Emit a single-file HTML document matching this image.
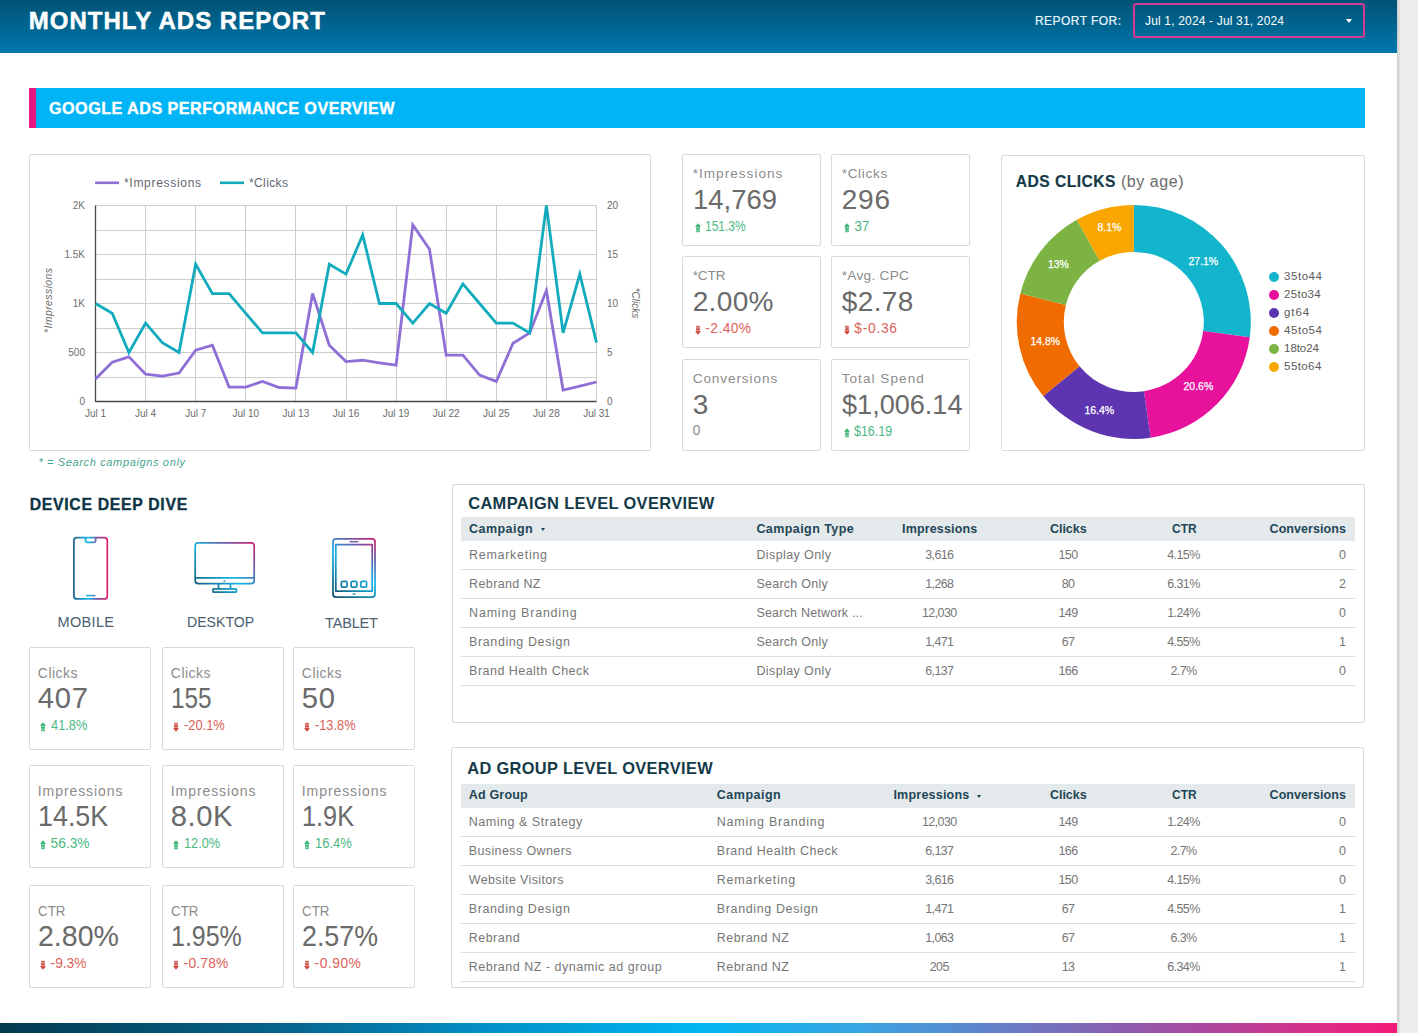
<!DOCTYPE html>
<html><head><meta charset="utf-8"><title>Monthly Ads Report</title>
<style>
html,body{margin:0;padding:0}
body{width:1418px;height:1033px;position:relative;overflow:hidden;background:#ededed;font-family:'Liberation Sans', sans-serif}
.t{position:absolute;white-space:pre;font-family:'Liberation Sans', sans-serif}
</style></head><body>
<div style="position:absolute;left:0px;top:0px;width:1397px;height:1033px;background:#fff"></div><div style="position:absolute;left:1397px;top:0px;width:3px;height:1033px;background:linear-gradient(90deg,#cccccc,#e4e4e4)"></div><div style="position:absolute;left:0px;top:0px;width:1397px;height:53px;background:linear-gradient(#005274,#0078ad)"></div><div style="position:absolute;left:1133px;top:3px;width:232px;height:35px;border:2px solid #d43a94;border-radius:3px;box-sizing:border-box"></div><div style="position:absolute;left:1346px;top:19px;width:0;height:0;border-left:3.5px solid transparent;border-right:3.5px solid transparent;border-top:4px solid #fff"></div><div style="position:absolute;left:29px;top:88px;width:1336px;height:40px;background:#00b4f5"></div><div style="position:absolute;left:29px;top:88px;width:7px;height:40px;background:#e8177f"></div><div style="position:absolute;left:0px;top:1023px;width:1397px;height:10px;background:linear-gradient(90deg,#033a50 0%,#06648c 20%,#0390c8 35%,#00b6f2 50%,#3aa4e2 62%,#8a5eb0 80%,#f51a78 100%)"></div><div style="position:absolute;left:29px;top:154px;width:622px;height:297px;border:1px solid #dadada;border-radius:2px;box-sizing:border-box;background:#fff"></div><svg style="position:absolute;left:0;top:0" width="1418" height="1033"><line x1="95.5" y1="205.50" x2="596.5" y2="205.50" stroke="#cccccc" stroke-width="1"/><line x1="95.5" y1="230.50" x2="596.5" y2="230.50" stroke="#cccccc" stroke-width="1"/><line x1="95.5" y1="254.50" x2="596.5" y2="254.50" stroke="#cccccc" stroke-width="1"/><line x1="95.5" y1="279.50" x2="596.5" y2="279.50" stroke="#cccccc" stroke-width="1"/><line x1="95.5" y1="303.50" x2="596.5" y2="303.50" stroke="#cccccc" stroke-width="1"/><line x1="95.5" y1="328.50" x2="596.5" y2="328.50" stroke="#cccccc" stroke-width="1"/><line x1="95.5" y1="352.50" x2="596.5" y2="352.50" stroke="#cccccc" stroke-width="1"/><line x1="95.5" y1="377.50" x2="596.5" y2="377.50" stroke="#cccccc" stroke-width="1"/><line x1="95.5" y1="401.50" x2="596.5" y2="401.50" stroke="#cccccc" stroke-width="1"/><line x1="95.50" y1="205.5" x2="95.50" y2="401.5" stroke="#cccccc" stroke-width="1"/><line x1="145.50" y1="205.5" x2="145.50" y2="401.5" stroke="#cccccc" stroke-width="1"/><line x1="195.50" y1="205.5" x2="195.50" y2="401.5" stroke="#cccccc" stroke-width="1"/><line x1="245.50" y1="205.5" x2="245.50" y2="401.5" stroke="#cccccc" stroke-width="1"/><line x1="295.50" y1="205.5" x2="295.50" y2="401.5" stroke="#cccccc" stroke-width="1"/><line x1="346.50" y1="205.5" x2="346.50" y2="401.5" stroke="#cccccc" stroke-width="1"/><line x1="396.50" y1="205.5" x2="396.50" y2="401.5" stroke="#cccccc" stroke-width="1"/><line x1="446.50" y1="205.5" x2="446.50" y2="401.5" stroke="#cccccc" stroke-width="1"/><line x1="496.50" y1="205.5" x2="496.50" y2="401.5" stroke="#cccccc" stroke-width="1"/><line x1="546.50" y1="205.5" x2="546.50" y2="401.5" stroke="#cccccc" stroke-width="1"/><line x1="596.50" y1="205.5" x2="596.50" y2="401.5" stroke="#cccccc" stroke-width="1"/><line x1="95.5" y1="205.5" x2="95.5" y2="402.0" stroke="#4a4a4a" stroke-width="1.3"/><line x1="95.5" y1="401.5" x2="596.5" y2="401.5" stroke="#4a4a4a" stroke-width="1.3"/><polyline points="95.50,379.06 112.20,362.20 128.90,356.81 145.60,374.16 162.30,376.12 179.00,373.08 195.70,350.25 212.40,345.25 229.10,387.09 245.80,387.09 262.50,381.41 279.20,387.49 295.90,388.07 312.60,293.50 329.30,345.25 346.00,361.61 362.70,360.24 379.40,362.79 396.10,365.14 412.80,224.90 429.50,249.31 446.20,355.15 462.90,355.15 479.60,375.14 496.30,381.41 513.00,343.29 529.70,332.90 546.40,290.56 563.10,390.03 579.80,386.02 596.50,382.00" fill="none" stroke="#8f6fd6" stroke-width="2.8" stroke-linejoin="miter"/><polyline points="95.50,303.50 112.20,313.30 128.90,352.50 145.60,323.10 162.30,342.70 179.00,352.50 195.70,264.30 212.40,293.70 229.10,293.70 245.80,313.30 262.50,332.90 279.20,332.90 295.90,332.90 312.60,352.50 329.30,264.30 346.00,274.10 362.70,234.90 379.40,303.50 396.10,303.50 412.80,323.10 429.50,303.50 446.20,313.30 462.90,283.90 479.60,303.50 496.30,323.10 513.00,323.10 529.70,332.90 546.40,205.50 563.10,332.90 579.80,274.10 596.50,342.70" fill="none" stroke="#12abbd" stroke-width="2.8" stroke-linejoin="miter"/><line x1="95" y1="182.8" x2="119" y2="182.8" stroke="#8f6fd6" stroke-width="2.6"/><line x1="220" y1="182.8" x2="244" y2="182.8" stroke="#12abbd" stroke-width="2.6"/></svg><div style="position:absolute;left:18px;top:296px;width:60px;height:14px;line-height:14px;text-align:center;font-size:10.5px;letter-spacing:0.4px;font-style:italic;color:#6d6d6d;font-family:'Liberation Sans', sans-serif;transform:rotate(-90deg);transform-origin:30px 7px;">*Impressions</div><div style="position:absolute;left:605px;top:296px;width:60px;height:14px;line-height:14px;text-align:center;font-size:10px;font-style:italic;color:#6d6d6d;font-family:'Liberation Sans', sans-serif;transform:rotate(90deg);transform-origin:30px 7px;">*Clicks</div><div style="position:absolute;left:682px;top:154px;width:139px;height:92px;border:1px solid #dadada;border-radius:2px;box-sizing:border-box;background:#fff"></div><svg style="position:absolute;left:694.9px;top:222.6px" width="6" height="10"><path d="M3 0.2 L5.6 3.3 L5 4.4 L1 4.4 L0.4 3.3 Z" fill="#3bb578"/><rect x="1.1" y="4.9" width="3.8" height="1.9" fill="#3bb578"/><rect x="1.1" y="7.2" width="3.8" height="2" fill="#3bb578" opacity="0.85"/></svg><div style="position:absolute;left:831px;top:154px;width:139px;height:92px;border:1px solid #dadada;border-radius:2px;box-sizing:border-box;background:#fff"></div><svg style="position:absolute;left:843.9px;top:222.6px" width="6" height="10"><path d="M3 0.2 L5.6 3.3 L5 4.4 L1 4.4 L0.4 3.3 Z" fill="#3bb578"/><rect x="1.1" y="4.9" width="3.8" height="1.9" fill="#3bb578"/><rect x="1.1" y="7.2" width="3.8" height="2" fill="#3bb578" opacity="0.85"/></svg><div style="position:absolute;left:682px;top:256px;width:139px;height:92px;border:1px solid #dadada;border-radius:2px;box-sizing:border-box;background:#fff"></div><svg style="position:absolute;left:694.9px;top:324.59999999999997px" width="6" height="10"><path d="M3 9.8 L5.6 6.7 L5 5.6 L1 5.6 L0.4 6.7 Z" fill="#d04a42"/><rect x="1.1" y="3.2" width="3.8" height="1.9" fill="#d04a42"/><rect x="1.1" y="0.8" width="3.8" height="2" fill="#d04a42" opacity="0.85"/></svg><div style="position:absolute;left:831px;top:256px;width:139px;height:92px;border:1px solid #dadada;border-radius:2px;box-sizing:border-box;background:#fff"></div><svg style="position:absolute;left:843.9px;top:324.59999999999997px" width="6" height="10"><path d="M3 9.8 L5.6 6.7 L5 5.6 L1 5.6 L0.4 6.7 Z" fill="#d04a42"/><rect x="1.1" y="3.2" width="3.8" height="1.9" fill="#d04a42"/><rect x="1.1" y="0.8" width="3.8" height="2" fill="#d04a42" opacity="0.85"/></svg><div style="position:absolute;left:682px;top:359px;width:139px;height:92px;border:1px solid #dadada;border-radius:2px;box-sizing:border-box;background:#fff"></div><div style="position:absolute;left:831px;top:359px;width:139px;height:92px;border:1px solid #dadada;border-radius:2px;box-sizing:border-box;background:#fff"></div><svg style="position:absolute;left:843.9px;top:427.59999999999997px" width="6" height="10"><path d="M3 0.2 L5.6 3.3 L5 4.4 L1 4.4 L0.4 3.3 Z" fill="#3bb578"/><rect x="1.1" y="4.9" width="3.8" height="1.9" fill="#3bb578"/><rect x="1.1" y="7.2" width="3.8" height="2" fill="#3bb578" opacity="0.85"/></svg><div style="position:absolute;left:1001px;top:155px;width:364px;height:296px;border:1px solid #dadada;border-radius:2px;box-sizing:border-box;background:#fff"></div><svg style="position:absolute;left:0;top:0" width="1418" height="1033"><path d="M1133.80 204.90 A117 117 0 0 1 1249.78 337.29 L1203.19 331.11 A70 70 0 0 0 1133.80 251.90 Z" fill="#12b5cb"/><path d="M1249.78 337.29 A117 117 0 0 1 1150.65 437.68 L1143.88 391.17 A70 70 0 0 0 1203.19 331.11 Z" fill="#e8119c"/><path d="M1150.65 437.68 A117 117 0 0 1 1043.18 395.91 L1079.58 366.18 A70 70 0 0 0 1143.88 391.17 Z" fill="#5e35b1"/><path d="M1043.18 395.91 A117 117 0 0 1 1020.30 293.52 L1065.89 304.92 A70 70 0 0 0 1079.58 366.18 Z" fill="#f06c00"/><path d="M1020.30 293.52 A117 117 0 0 1 1076.79 219.73 L1099.69 260.77 A70 70 0 0 0 1065.89 304.92 Z" fill="#7cb342"/><path d="M1076.79 219.73 A117 117 0 0 1 1133.80 204.90 L1133.80 251.90 A70 70 0 0 0 1099.69 260.77 Z" fill="#f9a600"/></svg><div style="position:absolute;left:1269px;top:272px;width:10px;height:10px;border-radius:50%;background:#12b5cb"></div><div style="position:absolute;left:1269px;top:290px;width:10px;height:10px;border-radius:50%;background:#e8119c"></div><div style="position:absolute;left:1269px;top:308px;width:10px;height:10px;border-radius:50%;background:#5e35b1"></div><div style="position:absolute;left:1269px;top:326px;width:10px;height:10px;border-radius:50%;background:#f06c00"></div><div style="position:absolute;left:1269px;top:344px;width:10px;height:10px;border-radius:50%;background:#7cb342"></div><div style="position:absolute;left:1269px;top:362px;width:10px;height:10px;border-radius:50%;background:#f9a600"></div><div style="position:absolute;left:29px;top:647px;width:122px;height:103px;border:1px solid #dadada;border-radius:2px;box-sizing:border-box;background:#fff"></div><svg style="position:absolute;left:39.7px;top:721.7px" width="6" height="10"><path d="M3 0.2 L5.6 3.3 L5 4.4 L1 4.4 L0.4 3.3 Z" fill="#3bb578"/><rect x="1.1" y="4.9" width="3.8" height="1.9" fill="#3bb578"/><rect x="1.1" y="7.2" width="3.8" height="2" fill="#3bb578" opacity="0.85"/></svg><div style="position:absolute;left:162px;top:647px;width:122px;height:103px;border:1px solid #dadada;border-radius:2px;box-sizing:border-box;background:#fff"></div><svg style="position:absolute;left:172.7px;top:721.7px" width="6" height="10"><path d="M3 9.8 L5.6 6.7 L5 5.6 L1 5.6 L0.4 6.7 Z" fill="#d04a42"/><rect x="1.1" y="3.2" width="3.8" height="1.9" fill="#d04a42"/><rect x="1.1" y="0.8" width="3.8" height="2" fill="#d04a42" opacity="0.85"/></svg><div style="position:absolute;left:293px;top:647px;width:122px;height:103px;border:1px solid #dadada;border-radius:2px;box-sizing:border-box;background:#fff"></div><svg style="position:absolute;left:303.7px;top:721.7px" width="6" height="10"><path d="M3 9.8 L5.6 6.7 L5 5.6 L1 5.6 L0.4 6.7 Z" fill="#d04a42"/><rect x="1.1" y="3.2" width="3.8" height="1.9" fill="#d04a42"/><rect x="1.1" y="0.8" width="3.8" height="2" fill="#d04a42" opacity="0.85"/></svg><div style="position:absolute;left:29px;top:765px;width:122px;height:103px;border:1px solid #dadada;border-radius:2px;box-sizing:border-box;background:#fff"></div><svg style="position:absolute;left:39.7px;top:839.7px" width="6" height="10"><path d="M3 0.2 L5.6 3.3 L5 4.4 L1 4.4 L0.4 3.3 Z" fill="#3bb578"/><rect x="1.1" y="4.9" width="3.8" height="1.9" fill="#3bb578"/><rect x="1.1" y="7.2" width="3.8" height="2" fill="#3bb578" opacity="0.85"/></svg><div style="position:absolute;left:162px;top:765px;width:122px;height:103px;border:1px solid #dadada;border-radius:2px;box-sizing:border-box;background:#fff"></div><svg style="position:absolute;left:172.7px;top:839.7px" width="6" height="10"><path d="M3 0.2 L5.6 3.3 L5 4.4 L1 4.4 L0.4 3.3 Z" fill="#3bb578"/><rect x="1.1" y="4.9" width="3.8" height="1.9" fill="#3bb578"/><rect x="1.1" y="7.2" width="3.8" height="2" fill="#3bb578" opacity="0.85"/></svg><div style="position:absolute;left:293px;top:765px;width:122px;height:103px;border:1px solid #dadada;border-radius:2px;box-sizing:border-box;background:#fff"></div><svg style="position:absolute;left:303.7px;top:839.7px" width="6" height="10"><path d="M3 0.2 L5.6 3.3 L5 4.4 L1 4.4 L0.4 3.3 Z" fill="#3bb578"/><rect x="1.1" y="4.9" width="3.8" height="1.9" fill="#3bb578"/><rect x="1.1" y="7.2" width="3.8" height="2" fill="#3bb578" opacity="0.85"/></svg><div style="position:absolute;left:29px;top:885px;width:122px;height:103px;border:1px solid #dadada;border-radius:2px;box-sizing:border-box;background:#fff"></div><svg style="position:absolute;left:39.7px;top:959.7px" width="6" height="10"><path d="M3 9.8 L5.6 6.7 L5 5.6 L1 5.6 L0.4 6.7 Z" fill="#d04a42"/><rect x="1.1" y="3.2" width="3.8" height="1.9" fill="#d04a42"/><rect x="1.1" y="0.8" width="3.8" height="2" fill="#d04a42" opacity="0.85"/></svg><div style="position:absolute;left:162px;top:885px;width:122px;height:103px;border:1px solid #dadada;border-radius:2px;box-sizing:border-box;background:#fff"></div><svg style="position:absolute;left:172.7px;top:959.7px" width="6" height="10"><path d="M3 9.8 L5.6 6.7 L5 5.6 L1 5.6 L0.4 6.7 Z" fill="#d04a42"/><rect x="1.1" y="3.2" width="3.8" height="1.9" fill="#d04a42"/><rect x="1.1" y="0.8" width="3.8" height="2" fill="#d04a42" opacity="0.85"/></svg><div style="position:absolute;left:293px;top:885px;width:122px;height:103px;border:1px solid #dadada;border-radius:2px;box-sizing:border-box;background:#fff"></div><svg style="position:absolute;left:303.7px;top:959.7px" width="6" height="10"><path d="M3 9.8 L5.6 6.7 L5 5.6 L1 5.6 L0.4 6.7 Z" fill="#d04a42"/><rect x="1.1" y="3.2" width="3.8" height="1.9" fill="#d04a42"/><rect x="1.1" y="0.8" width="3.8" height="2" fill="#d04a42" opacity="0.85"/></svg><div style="position:absolute;left:452px;top:484px;width:913px;height:239px;border:1px solid #dadada;border-radius:2px;box-sizing:border-box;background:#fff"></div><div style="position:absolute;left:461px;top:517.2px;width:894px;height:23.59999999999991px;background:#e4e9ec"></div><div style="position:absolute;left:461px;top:569.2px;width:894px;height:1.0px;background:#dcdcdc"></div><div style="position:absolute;left:461px;top:597.9px;width:894px;height:1.0px;background:#dcdcdc"></div><div style="position:absolute;left:461px;top:626.9px;width:894px;height:1.0px;background:#dcdcdc"></div><div style="position:absolute;left:461px;top:655.9px;width:894px;height:1.0px;background:#dcdcdc"></div><div style="position:absolute;left:461px;top:685.0px;width:894px;height:1.0px;background:#dcdcdc"></div><div style="position:absolute;left:540.9px;top:528.2px;width:0;height:0;border-left:2.6px solid transparent;border-right:2.6px solid transparent;border-top:3px solid #1b3f52"></div><div style="position:absolute;left:451px;top:747px;width:913px;height:241px;border:1px solid #dadada;border-radius:2px;box-sizing:border-box;background:#fff"></div><div style="position:absolute;left:461px;top:783.8px;width:894px;height:23.800000000000068px;background:#e4e9ec"></div><div style="position:absolute;left:461px;top:835.8px;width:894px;height:1.0px;background:#dcdcdc"></div><div style="position:absolute;left:461px;top:864.7px;width:894px;height:1.0px;background:#dcdcdc"></div><div style="position:absolute;left:461px;top:893.9px;width:894px;height:1.0px;background:#dcdcdc"></div><div style="position:absolute;left:461px;top:922.8px;width:894px;height:1.0px;background:#dcdcdc"></div><div style="position:absolute;left:461px;top:951.6px;width:894px;height:1.0px;background:#dcdcdc"></div><div style="position:absolute;left:461px;top:980.5px;width:894px;height:1.0px;background:#dcdcdc"></div><div style="position:absolute;left:976.6px;top:794.8px;width:0;height:0;border-left:2.6px solid transparent;border-right:2.6px solid transparent;border-top:3px solid #1b3f52"></div><svg style="position:absolute;left:0;top:0" width="1418" height="1033">
<defs>
<linearGradient id="gph" gradientUnits="userSpaceOnUse" x1="73" y1="570" x2="108" y2="570">
<stop offset="0" stop-color="#225f88"/><stop offset="0.45" stop-color="#14b9e6"/><stop offset="0.7" stop-color="#7a50a0"/><stop offset="1" stop-color="#e3226e"/></linearGradient>
<linearGradient id="gdk" gradientUnits="userSpaceOnUse" x1="200" y1="600" x2="255" y2="535">
<stop offset="0" stop-color="#173f5c"/><stop offset="0.45" stop-color="#14b6e6"/><stop offset="0.7" stop-color="#6a5aa8"/><stop offset="1" stop-color="#ec1464"/></linearGradient>
<linearGradient id="gtb" gradientUnits="userSpaceOnUse" x1="330" y1="600" x2="378" y2="536">
<stop offset="0" stop-color="#173f5c"/><stop offset="0.5" stop-color="#14b6e6"/><stop offset="0.75" stop-color="#6a5aa8"/><stop offset="1" stop-color="#ec1464"/></linearGradient>
</defs>
<g fill="none" stroke-width="1.75" stroke-linejoin="round">
<!-- phone -->
<g stroke="url(#gph)">
<rect x="73.9" y="537.7" width="33.4" height="61.2" rx="3"/><path d="M85.6 537.7 V540.8 Q85.6 542.4 87.2 542.4 H94 Q95.6 542.4 95.6 540.8 V537.7"/>
<line x1="86" y1="595.6" x2="95.4" y2="595.6" stroke-width="1.5"/>
</g>
<!-- desktop -->
<g stroke="url(#gdk)">
<rect x="195.2" y="542.8" width="59" height="40.8" rx="3"/>
<line x1="195.2" y1="577.8" x2="254.2" y2="577.8"/>
<line x1="218.5" y1="583.6" x2="218.5" y2="588.8"/>
<line x1="230.5" y1="583.6" x2="230.5" y2="588.8"/>
<rect x="213" y="588.8" width="23.4" height="3.4" rx="0.8"/>
</g>
<ellipse cx="224.4" cy="581" rx="1.2" ry="0.8" fill="#1d8fbf"/>
<!-- tablet -->
<g stroke="url(#gtb)">
<rect x="333" y="538.8" width="42" height="58.3" rx="3"/>
<rect x="335.8" y="544.6" width="36.4" height="46.4"/>
<line x1="349.6" y1="541.7" x2="358.3" y2="541.7" stroke-width="1.4"/>
<rect x="341.3" y="581.4" width="5.8" height="5.8" rx="1.4"/>
<rect x="351.1" y="581.4" width="5.8" height="5.8" rx="1.4"/>
<rect x="360.8" y="581.4" width="5.8" height="5.8" rx="1.4"/>
<line x1="352.6" y1="594" x2="355.6" y2="594" stroke-width="1.2"/>
</g>
</g>
</svg>

<div class="t" style="left:28.80px;top:8.88px;font-size:24px;line-height:24px;color:#fff;font-weight:700;letter-spacing:0.992px;-webkit-text-stroke:0.5px #fff;">MONTHLY ADS REPORT</div><div class="t" style="left:1035.00px;top:14.54px;font-size:12px;line-height:12px;color:#e6f6ff;letter-spacing:0.442px;-webkit-text-stroke:0.2px #e6f6ff;">REPORT FOR:</div><div class="t" style="left:1145.00px;top:14.54px;font-size:12px;line-height:12px;color:#fff;letter-spacing:0.169px;">Jul 1, 2024 - Jul 31, 2024</div><div class="t" style="left:49.00px;top:100.29px;font-size:16.2px;line-height:16.2px;color:#fff;font-weight:700;letter-spacing:0.454px;-webkit-text-stroke:0.35px #fff;">GOOGLE ADS PERFORMANCE OVERVIEW</div><div class="t" style="left:124.00px;top:176.84px;font-size:12px;line-height:12px;color:#5f6770;letter-spacing:0.695px;">*Impressions</div><div class="t" style="left:249.00px;top:176.84px;font-size:12px;line-height:12px;color:#5f6770;letter-spacing:0.388px;">*Clicks</div><div class="t" style="left:79.44px;top:397.24px;font-size:10px;line-height:10px;color:#6d6d6d;">0</div><div class="t" style="left:68.31px;top:348.24px;font-size:10px;line-height:10px;color:#6d6d6d;">500</div><div class="t" style="left:72.77px;top:299.24px;font-size:10px;line-height:10px;color:#6d6d6d;">1K</div><div class="t" style="left:64.42px;top:250.23px;font-size:10px;line-height:10px;color:#6d6d6d;">1.5K</div><div class="t" style="left:72.77px;top:201.23px;font-size:10px;line-height:10px;color:#6d6d6d;">2K</div><div class="t" style="left:607.00px;top:397.24px;font-size:10px;line-height:10px;color:#6d6d6d;">0</div><div class="t" style="left:607.00px;top:348.24px;font-size:10px;line-height:10px;color:#6d6d6d;">5</div><div class="t" style="left:607.00px;top:299.24px;font-size:10px;line-height:10px;color:#6d6d6d;">10</div><div class="t" style="left:607.00px;top:250.23px;font-size:10px;line-height:10px;color:#6d6d6d;">15</div><div class="t" style="left:607.00px;top:201.23px;font-size:10px;line-height:10px;color:#6d6d6d;">20</div><div class="t" style="left:84.94px;top:409.04px;font-size:10px;line-height:10px;color:#6d6d6d;">Jul 1</div><div class="t" style="left:135.04px;top:409.04px;font-size:10px;line-height:10px;color:#6d6d6d;">Jul 4</div><div class="t" style="left:185.14px;top:409.04px;font-size:10px;line-height:10px;color:#6d6d6d;">Jul 7</div><div class="t" style="left:232.46px;top:409.04px;font-size:10px;line-height:10px;color:#6d6d6d;">Jul 10</div><div class="t" style="left:282.56px;top:409.04px;font-size:10px;line-height:10px;color:#6d6d6d;">Jul 13</div><div class="t" style="left:332.66px;top:409.04px;font-size:10px;line-height:10px;color:#6d6d6d;">Jul 16</div><div class="t" style="left:382.76px;top:409.04px;font-size:10px;line-height:10px;color:#6d6d6d;">Jul 19</div><div class="t" style="left:432.86px;top:409.04px;font-size:10px;line-height:10px;color:#6d6d6d;">Jul 22</div><div class="t" style="left:482.96px;top:409.04px;font-size:10px;line-height:10px;color:#6d6d6d;">Jul 25</div><div class="t" style="left:533.06px;top:409.04px;font-size:10px;line-height:10px;color:#6d6d6d;">Jul 28</div><div class="t" style="left:583.16px;top:409.04px;font-size:10px;line-height:10px;color:#6d6d6d;">Jul 31</div><div class="t" style="left:38.40px;top:456.89px;font-size:11px;line-height:11px;color:#45a48f;font-style:italic;letter-spacing:0.643px;">* = Search campaigns only</div><div class="t" style="left:692.70px;top:167.39px;font-size:13.6px;line-height:13.6px;color:#8c8c8c;letter-spacing:1.011px;">*Impressions</div><div class="t" style="left:692.70px;top:186.30px;font-size:28px;line-height:28px;color:#6a6a6a;transform:scaleX(0.9797);transform-origin:0 0;">14,769</div><div class="t" style="left:705.30px;top:219.52px;font-size:13.8px;line-height:13.8px;color:#4cb982;transform:scaleX(0.8697);transform-origin:0 0;">151.3%</div><div class="t" style="left:841.70px;top:167.39px;font-size:13.6px;line-height:13.6px;color:#8c8c8c;letter-spacing:0.659px;">*Clicks</div><div class="t" style="left:841.70px;top:186.30px;font-size:28px;line-height:28px;color:#6a6a6a;letter-spacing:0.800px;">296</div><div class="t" style="left:854.30px;top:219.52px;font-size:13.8px;line-height:13.8px;color:#4cb982;letter-spacing:-0.159px;">37</div><div class="t" style="left:692.70px;top:269.39px;font-size:13.6px;line-height:13.6px;color:#8c8c8c;letter-spacing:-0.111px;">*CTR</div><div class="t" style="left:692.70px;top:288.30px;font-size:28px;line-height:28px;color:#6a6a6a;letter-spacing:0.348px;">2.00%</div><div class="t" style="left:705.30px;top:321.52px;font-size:13.8px;line-height:13.8px;color:#dc6259;letter-spacing:0.416px;">-2.40%</div><div class="t" style="left:841.70px;top:269.39px;font-size:13.6px;line-height:13.6px;color:#8c8c8c;letter-spacing:0.308px;">*Avg. CPC</div><div class="t" style="left:841.70px;top:288.30px;font-size:28px;line-height:28px;color:#6a6a6a;letter-spacing:0.405px;">$2.78</div><div class="t" style="left:854.30px;top:321.52px;font-size:13.8px;line-height:13.8px;color:#dc6259;letter-spacing:0.715px;">$-0.36</div><div class="t" style="left:692.70px;top:372.39px;font-size:13.6px;line-height:13.6px;color:#8c8c8c;letter-spacing:0.894px;">Conversions</div><div class="t" style="left:692.70px;top:391.30px;font-size:28px;line-height:28px;color:#6a6a6a;">3</div><div class="t" style="left:692.70px;top:424.12px;font-size:13.8px;line-height:13.8px;color:#8c8c8c;">0</div><div class="t" style="left:841.70px;top:372.39px;font-size:13.6px;line-height:13.6px;color:#8c8c8c;letter-spacing:1.029px;">Total Spend</div><div class="t" style="left:841.70px;top:391.30px;font-size:28px;line-height:28px;color:#6a6a6a;transform:scaleX(0.9673);transform-origin:0 0;">$1,006.14</div><div class="t" style="left:854.30px;top:424.52px;font-size:13.8px;line-height:13.8px;color:#4cb982;transform:scaleX(0.9028);transform-origin:0 0;">$16.19</div><div class="t" style="left:1015.70px;top:174.09px;font-size:15.6px;line-height:15.6px;color:#143a48;font-weight:700;letter-spacing:0.488px;-webkit-text-stroke:0.15px #143a48;">ADS CLICKS</div><div class="t" style="left:1121.00px;top:173.76px;font-size:16px;line-height:16px;color:#6a6a6a;letter-spacing:0.542px;">(by age)</div><div class="t" style="left:1188.41px;top:255.91px;font-size:10.5px;line-height:10.5px;color:#fff;-webkit-text-stroke:0.25px #fff;">27.1%</div><div class="t" style="left:1183.51px;top:381.41px;font-size:10.5px;line-height:10.5px;color:#fff;-webkit-text-stroke:0.25px #fff;">20.6%</div><div class="t" style="left:1084.41px;top:404.91px;font-size:10.5px;line-height:10.5px;color:#fff;-webkit-text-stroke:0.25px #fff;">16.4%</div><div class="t" style="left:1030.41px;top:335.81px;font-size:10.5px;line-height:10.5px;color:#fff;-webkit-text-stroke:0.25px #fff;">14.8%</div><div class="t" style="left:1047.89px;top:258.71px;font-size:10.5px;line-height:10.5px;color:#fff;-webkit-text-stroke:0.25px #fff;">13%</div><div class="t" style="left:1097.43px;top:222.21px;font-size:10.5px;line-height:10.5px;color:#fff;-webkit-text-stroke:0.25px #fff;">8.1%</div><div class="t" style="left:1284.10px;top:271.27px;font-size:11.5px;line-height:11.5px;color:#5a5a5a;letter-spacing:0.522px;">35to44</div><div class="t" style="left:1284.10px;top:289.27px;font-size:11.5px;line-height:11.5px;color:#5a5a5a;letter-spacing:0.283px;">25to34</div><div class="t" style="left:1284.10px;top:307.27px;font-size:11.5px;line-height:11.5px;color:#5a5a5a;letter-spacing:0.870px;">gt64</div><div class="t" style="left:1284.10px;top:325.27px;font-size:11.5px;line-height:11.5px;color:#5a5a5a;letter-spacing:0.522px;">45to54</div><div class="t" style="left:1284.10px;top:343.27px;font-size:11.5px;line-height:11.5px;color:#5a5a5a;letter-spacing:-0.078px;">18to24</div><div class="t" style="left:1284.10px;top:361.27px;font-size:11.5px;line-height:11.5px;color:#5a5a5a;letter-spacing:0.403px;">55to64</div><div class="t" style="left:29.70px;top:496.53px;font-size:15.8px;line-height:15.8px;color:#0e3445;font-weight:700;letter-spacing:0.686px;-webkit-text-stroke:0.35px #0e3445;">DEVICE DEEP DIVE</div><div class="t" style="left:57.60px;top:615.13px;font-size:14.5px;line-height:14.5px;color:#4a6070;letter-spacing:0.321px;">MOBILE</div><div class="t" style="left:187.05px;top:615.13px;font-size:14.5px;line-height:14.5px;color:#4a6070;transform:scaleX(0.9720);transform-origin:0 0;">DESKTOP</div><div class="t" style="left:325.05px;top:615.73px;font-size:14.5px;line-height:14.5px;color:#4a6070;letter-spacing:-0.164px;">TABLET</div><div class="t" style="left:37.80px;top:666.35px;font-size:14px;line-height:14px;color:#8c8c8c;letter-spacing:0.471px;">Clicks</div><div class="t" style="left:37.80px;top:684.28px;font-size:29.2px;line-height:29.2px;color:#6a6a6a;letter-spacing:0.800px;">407</div><div class="t" style="left:50.60px;top:718.52px;font-size:13.8px;line-height:13.8px;color:#4cb982;transform:scaleX(0.9304);transform-origin:0 0;">41.8%</div><div class="t" style="left:170.80px;top:666.35px;font-size:14px;line-height:14px;color:#8c8c8c;letter-spacing:0.471px;">Clicks</div><div class="t" style="left:170.80px;top:684.28px;font-size:29.2px;line-height:29.2px;color:#6a6a6a;transform:scaleX(0.8316);transform-origin:0 0;">155</div><div class="t" style="left:183.60px;top:718.52px;font-size:13.8px;line-height:13.8px;color:#dc6259;transform:scaleX(0.9332);transform-origin:0 0;">-20.1%</div><div class="t" style="left:301.80px;top:666.35px;font-size:14px;line-height:14px;color:#8c8c8c;letter-spacing:0.471px;">Clicks</div><div class="t" style="left:301.80px;top:684.28px;font-size:29.2px;line-height:29.2px;color:#6a6a6a;letter-spacing:0.731px;">50</div><div class="t" style="left:314.60px;top:718.52px;font-size:13.8px;line-height:13.8px;color:#dc6259;transform:scaleX(0.9264);transform-origin:0 0;">-13.8%</div><div class="t" style="left:37.80px;top:784.35px;font-size:14px;line-height:14px;color:#8c8c8c;letter-spacing:0.923px;">Impressions</div><div class="t" style="left:37.80px;top:802.28px;font-size:29.2px;line-height:29.2px;color:#6a6a6a;transform:scaleX(0.9203);transform-origin:0 0;">14.5K</div><div class="t" style="left:50.60px;top:836.52px;font-size:13.8px;line-height:13.8px;color:#4cb982;letter-spacing:-0.031px;">56.3%</div><div class="t" style="left:170.80px;top:784.35px;font-size:14px;line-height:14px;color:#8c8c8c;letter-spacing:0.923px;">Impressions</div><div class="t" style="left:170.80px;top:802.28px;font-size:29.2px;line-height:29.2px;color:#6a6a6a;letter-spacing:0.518px;">8.0K</div><div class="t" style="left:183.60px;top:836.52px;font-size:13.8px;line-height:13.8px;color:#4cb982;transform:scaleX(0.9227);transform-origin:0 0;">12.0%</div><div class="t" style="left:301.80px;top:784.35px;font-size:14px;line-height:14px;color:#8c8c8c;letter-spacing:0.923px;">Impressions</div><div class="t" style="left:301.80px;top:802.28px;font-size:29.2px;line-height:29.2px;color:#6a6a6a;transform:scaleX(0.8660);transform-origin:0 0;">1.9K</div><div class="t" style="left:314.60px;top:836.52px;font-size:13.8px;line-height:13.8px;color:#4cb982;transform:scaleX(0.9380);transform-origin:0 0;">16.4%</div><div class="t" style="left:37.80px;top:904.35px;font-size:14px;line-height:14px;color:#8c8c8c;transform:scaleX(0.9555);transform-origin:0 0;">CTR</div><div class="t" style="left:37.80px;top:922.28px;font-size:29.2px;line-height:29.2px;color:#6a6a6a;transform:scaleX(0.9775);transform-origin:0 0;">2.80%</div><div class="t" style="left:50.60px;top:956.52px;font-size:13.8px;line-height:13.8px;color:#dc6259;letter-spacing:-0.037px;">-9.3%</div><div class="t" style="left:170.80px;top:904.35px;font-size:14px;line-height:14px;color:#8c8c8c;transform:scaleX(0.9555);transform-origin:0 0;">CTR</div><div class="t" style="left:170.80px;top:922.28px;font-size:29.2px;line-height:29.2px;color:#6a6a6a;transform:scaleX(0.8554);transform-origin:0 0;">1.95%</div><div class="t" style="left:183.60px;top:956.52px;font-size:13.8px;line-height:13.8px;color:#dc6259;letter-spacing:0.216px;">-0.78%</div><div class="t" style="left:301.80px;top:904.35px;font-size:14px;line-height:14px;color:#8c8c8c;transform:scaleX(0.9555);transform-origin:0 0;">CTR</div><div class="t" style="left:301.80px;top:922.28px;font-size:29.2px;line-height:29.2px;color:#6a6a6a;transform:scaleX(0.9183);transform-origin:0 0;">2.57%</div><div class="t" style="left:314.60px;top:956.52px;font-size:13.8px;line-height:13.8px;color:#dc6259;letter-spacing:0.516px;">-0.90%</div><div class="t" style="left:468.20px;top:494.62px;font-size:16.4px;line-height:16.4px;color:#143a48;font-weight:700;letter-spacing:0.377px;">CAMPAIGN LEVEL OVERVIEW</div><div class="t" style="left:469.10px;top:522.62px;font-size:12.5px;line-height:12.5px;color:#1f4656;font-weight:700;letter-spacing:0.438px;">Campaign</div><div class="t" style="left:756.40px;top:522.62px;font-size:12.5px;line-height:12.5px;color:#1f4656;font-weight:700;letter-spacing:0.429px;">Campaign Type</div><div class="t" style="left:902.00px;top:522.62px;font-size:12.5px;line-height:12.5px;color:#1f4656;font-weight:700;letter-spacing:0.156px;">Impressions</div><div class="t" style="left:1050.00px;top:522.62px;font-size:12.5px;line-height:12.5px;color:#1f4656;font-weight:700;letter-spacing:-0.049px;">Clicks</div><div class="t" style="left:1171.50px;top:522.62px;font-size:12.5px;line-height:12.5px;color:#1f4656;font-weight:700;transform:scaleX(0.9571);transform-origin:0 0;">CTR</div><div class="t" style="left:1269.60px;top:522.62px;font-size:12.5px;line-height:12.5px;color:#1f4656;font-weight:700;letter-spacing:0.058px;">Conversions</div><div class="t" style="left:469.10px;top:548.72px;font-size:12.5px;line-height:12.5px;color:#767676;letter-spacing:0.703px;">Remarketing</div><div class="t" style="left:756.40px;top:548.72px;font-size:12.5px;line-height:12.5px;color:#767676;letter-spacing:0.403px;">Display Only</div><div class="t" style="left:925.16px;top:548.72px;font-size:12.5px;line-height:12.5px;color:#767676;letter-spacing:-0.600px;">3,616</div><div class="t" style="left:1058.47px;top:548.72px;font-size:12.5px;line-height:12.5px;color:#767676;letter-spacing:-0.600px;">150</div><div class="t" style="left:1167.27px;top:548.72px;font-size:12.5px;line-height:12.5px;color:#767676;letter-spacing:-0.600px;">4.15%</div><div class="t" style="left:1338.95px;top:548.72px;font-size:12.5px;line-height:12.5px;color:#767676;letter-spacing:-0.600px;">0</div><div class="t" style="left:469.10px;top:577.72px;font-size:12.5px;line-height:12.5px;color:#767676;letter-spacing:0.367px;">Rebrand NZ</div><div class="t" style="left:756.40px;top:577.72px;font-size:12.5px;line-height:12.5px;color:#767676;letter-spacing:0.252px;">Search Only</div><div class="t" style="left:925.16px;top:577.72px;font-size:12.5px;line-height:12.5px;color:#767676;letter-spacing:-0.600px;">1,268</div><div class="t" style="left:1061.65px;top:577.72px;font-size:12.5px;line-height:12.5px;color:#767676;letter-spacing:-0.600px;">80</div><div class="t" style="left:1167.27px;top:577.72px;font-size:12.5px;line-height:12.5px;color:#767676;letter-spacing:-0.600px;">6.31%</div><div class="t" style="left:1338.95px;top:577.72px;font-size:12.5px;line-height:12.5px;color:#767676;letter-spacing:-0.600px;">2</div><div class="t" style="left:469.10px;top:606.72px;font-size:12.5px;line-height:12.5px;color:#767676;letter-spacing:0.779px;">Naming Branding</div><div class="t" style="left:756.40px;top:606.72px;font-size:12.5px;line-height:12.5px;color:#767676;letter-spacing:0.210px;">Search Network ...</div><div class="t" style="left:921.98px;top:606.72px;font-size:12.5px;line-height:12.5px;color:#767676;letter-spacing:-0.600px;">12,030</div><div class="t" style="left:1058.47px;top:606.72px;font-size:12.5px;line-height:12.5px;color:#767676;letter-spacing:-0.600px;">149</div><div class="t" style="left:1167.27px;top:606.72px;font-size:12.5px;line-height:12.5px;color:#767676;letter-spacing:-0.600px;">1.24%</div><div class="t" style="left:1338.95px;top:606.72px;font-size:12.5px;line-height:12.5px;color:#767676;letter-spacing:-0.600px;">0</div><div class="t" style="left:469.10px;top:635.72px;font-size:12.5px;line-height:12.5px;color:#767676;letter-spacing:0.598px;">Branding Design</div><div class="t" style="left:756.40px;top:635.72px;font-size:12.5px;line-height:12.5px;color:#767676;letter-spacing:0.252px;">Search Only</div><div class="t" style="left:925.16px;top:635.72px;font-size:12.5px;line-height:12.5px;color:#767676;letter-spacing:-0.600px;">1,471</div><div class="t" style="left:1061.65px;top:635.72px;font-size:12.5px;line-height:12.5px;color:#767676;letter-spacing:-0.600px;">67</div><div class="t" style="left:1167.27px;top:635.72px;font-size:12.5px;line-height:12.5px;color:#767676;letter-spacing:-0.600px;">4.55%</div><div class="t" style="left:1338.95px;top:635.72px;font-size:12.5px;line-height:12.5px;color:#767676;letter-spacing:-0.600px;">1</div><div class="t" style="left:469.10px;top:664.72px;font-size:12.5px;line-height:12.5px;color:#767676;letter-spacing:0.472px;">Brand Health Check</div><div class="t" style="left:756.40px;top:664.72px;font-size:12.5px;line-height:12.5px;color:#767676;letter-spacing:0.403px;">Display Only</div><div class="t" style="left:925.16px;top:664.72px;font-size:12.5px;line-height:12.5px;color:#767676;letter-spacing:-0.600px;">6,137</div><div class="t" style="left:1058.47px;top:664.72px;font-size:12.5px;line-height:12.5px;color:#767676;letter-spacing:-0.600px;">166</div><div class="t" style="left:1170.45px;top:664.72px;font-size:12.5px;line-height:12.5px;color:#767676;letter-spacing:-0.600px;">2.7%</div><div class="t" style="left:1338.95px;top:664.72px;font-size:12.5px;line-height:12.5px;color:#767676;letter-spacing:-0.600px;">0</div><div class="t" style="left:467.20px;top:759.52px;font-size:16.4px;line-height:16.4px;color:#143a48;font-weight:700;letter-spacing:0.354px;">AD GROUP LEVEL OVERVIEW</div><div class="t" style="left:468.70px;top:789.22px;font-size:12.5px;line-height:12.5px;color:#1f4656;font-weight:700;letter-spacing:0.194px;">Ad Group</div><div class="t" style="left:716.80px;top:789.22px;font-size:12.5px;line-height:12.5px;color:#1f4656;font-weight:700;letter-spacing:0.495px;">Campaign</div><div class="t" style="left:893.40px;top:789.22px;font-size:12.5px;line-height:12.5px;color:#1f4656;font-weight:700;letter-spacing:0.226px;">Impressions</div><div class="t" style="left:1050.00px;top:789.22px;font-size:12.5px;line-height:12.5px;color:#1f4656;font-weight:700;letter-spacing:-0.049px;">Clicks</div><div class="t" style="left:1171.50px;top:789.22px;font-size:12.5px;line-height:12.5px;color:#1f4656;font-weight:700;transform:scaleX(0.9571);transform-origin:0 0;">CTR</div><div class="t" style="left:1269.60px;top:789.22px;font-size:12.5px;line-height:12.5px;color:#1f4656;font-weight:700;letter-spacing:0.058px;">Conversions</div><div class="t" style="left:468.70px;top:815.92px;font-size:12.5px;line-height:12.5px;color:#767676;letter-spacing:0.536px;">Naming &amp; Strategy</div><div class="t" style="left:716.80px;top:815.92px;font-size:12.5px;line-height:12.5px;color:#767676;letter-spacing:0.793px;">Naming Branding</div><div class="t" style="left:921.98px;top:815.92px;font-size:12.5px;line-height:12.5px;color:#767676;letter-spacing:-0.600px;">12,030</div><div class="t" style="left:1058.47px;top:815.92px;font-size:12.5px;line-height:12.5px;color:#767676;letter-spacing:-0.600px;">149</div><div class="t" style="left:1167.27px;top:815.92px;font-size:12.5px;line-height:12.5px;color:#767676;letter-spacing:-0.600px;">1.24%</div><div class="t" style="left:1338.95px;top:815.92px;font-size:12.5px;line-height:12.5px;color:#767676;letter-spacing:-0.600px;">0</div><div class="t" style="left:468.70px;top:844.92px;font-size:12.5px;line-height:12.5px;color:#767676;letter-spacing:0.395px;">Business Owners</div><div class="t" style="left:716.80px;top:844.92px;font-size:12.5px;line-height:12.5px;color:#767676;letter-spacing:0.519px;">Brand Health Check</div><div class="t" style="left:925.16px;top:844.92px;font-size:12.5px;line-height:12.5px;color:#767676;letter-spacing:-0.600px;">6,137</div><div class="t" style="left:1058.47px;top:844.92px;font-size:12.5px;line-height:12.5px;color:#767676;letter-spacing:-0.600px;">166</div><div class="t" style="left:1170.45px;top:844.92px;font-size:12.5px;line-height:12.5px;color:#767676;letter-spacing:-0.600px;">2.7%</div><div class="t" style="left:1338.95px;top:844.92px;font-size:12.5px;line-height:12.5px;color:#767676;letter-spacing:-0.600px;">0</div><div class="t" style="left:468.70px;top:873.92px;font-size:12.5px;line-height:12.5px;color:#767676;letter-spacing:0.370px;">Website Visitors</div><div class="t" style="left:716.80px;top:873.92px;font-size:12.5px;line-height:12.5px;color:#767676;letter-spacing:0.762px;">Remarketing</div><div class="t" style="left:925.16px;top:873.92px;font-size:12.5px;line-height:12.5px;color:#767676;letter-spacing:-0.600px;">3,616</div><div class="t" style="left:1058.47px;top:873.92px;font-size:12.5px;line-height:12.5px;color:#767676;letter-spacing:-0.600px;">150</div><div class="t" style="left:1167.27px;top:873.92px;font-size:12.5px;line-height:12.5px;color:#767676;letter-spacing:-0.600px;">4.15%</div><div class="t" style="left:1338.95px;top:873.92px;font-size:12.5px;line-height:12.5px;color:#767676;letter-spacing:-0.600px;">0</div><div class="t" style="left:468.70px;top:902.92px;font-size:12.5px;line-height:12.5px;color:#767676;letter-spacing:0.627px;">Branding Design</div><div class="t" style="left:716.80px;top:902.92px;font-size:12.5px;line-height:12.5px;color:#767676;letter-spacing:0.627px;">Branding Design</div><div class="t" style="left:925.16px;top:902.92px;font-size:12.5px;line-height:12.5px;color:#767676;letter-spacing:-0.600px;">1,471</div><div class="t" style="left:1061.65px;top:902.92px;font-size:12.5px;line-height:12.5px;color:#767676;letter-spacing:-0.600px;">67</div><div class="t" style="left:1167.27px;top:902.92px;font-size:12.5px;line-height:12.5px;color:#767676;letter-spacing:-0.600px;">4.55%</div><div class="t" style="left:1338.95px;top:902.92px;font-size:12.5px;line-height:12.5px;color:#767676;letter-spacing:-0.600px;">1</div><div class="t" style="left:468.70px;top:931.92px;font-size:12.5px;line-height:12.5px;color:#767676;letter-spacing:0.491px;">Rebrand</div><div class="t" style="left:716.80px;top:931.92px;font-size:12.5px;line-height:12.5px;color:#767676;letter-spacing:0.434px;">Rebrand NZ</div><div class="t" style="left:925.16px;top:931.92px;font-size:12.5px;line-height:12.5px;color:#767676;letter-spacing:-0.600px;">1,063</div><div class="t" style="left:1061.65px;top:931.92px;font-size:12.5px;line-height:12.5px;color:#767676;letter-spacing:-0.600px;">67</div><div class="t" style="left:1170.45px;top:931.92px;font-size:12.5px;line-height:12.5px;color:#767676;letter-spacing:-0.600px;">6.3%</div><div class="t" style="left:1338.95px;top:931.92px;font-size:12.5px;line-height:12.5px;color:#767676;letter-spacing:-0.600px;">1</div><div class="t" style="left:468.70px;top:960.92px;font-size:12.5px;line-height:12.5px;color:#767676;letter-spacing:0.516px;">Rebrand NZ - dynamic ad group</div><div class="t" style="left:716.80px;top:960.92px;font-size:12.5px;line-height:12.5px;color:#767676;letter-spacing:0.434px;">Rebrand NZ</div><div class="t" style="left:929.77px;top:960.92px;font-size:12.5px;line-height:12.5px;color:#767676;letter-spacing:-0.600px;">205</div><div class="t" style="left:1061.65px;top:960.92px;font-size:12.5px;line-height:12.5px;color:#767676;letter-spacing:-0.600px;">13</div><div class="t" style="left:1167.27px;top:960.92px;font-size:12.5px;line-height:12.5px;color:#767676;letter-spacing:-0.600px;">6.34%</div><div class="t" style="left:1338.95px;top:960.92px;font-size:12.5px;line-height:12.5px;color:#767676;letter-spacing:-0.600px;">1</div>
</body></html>
